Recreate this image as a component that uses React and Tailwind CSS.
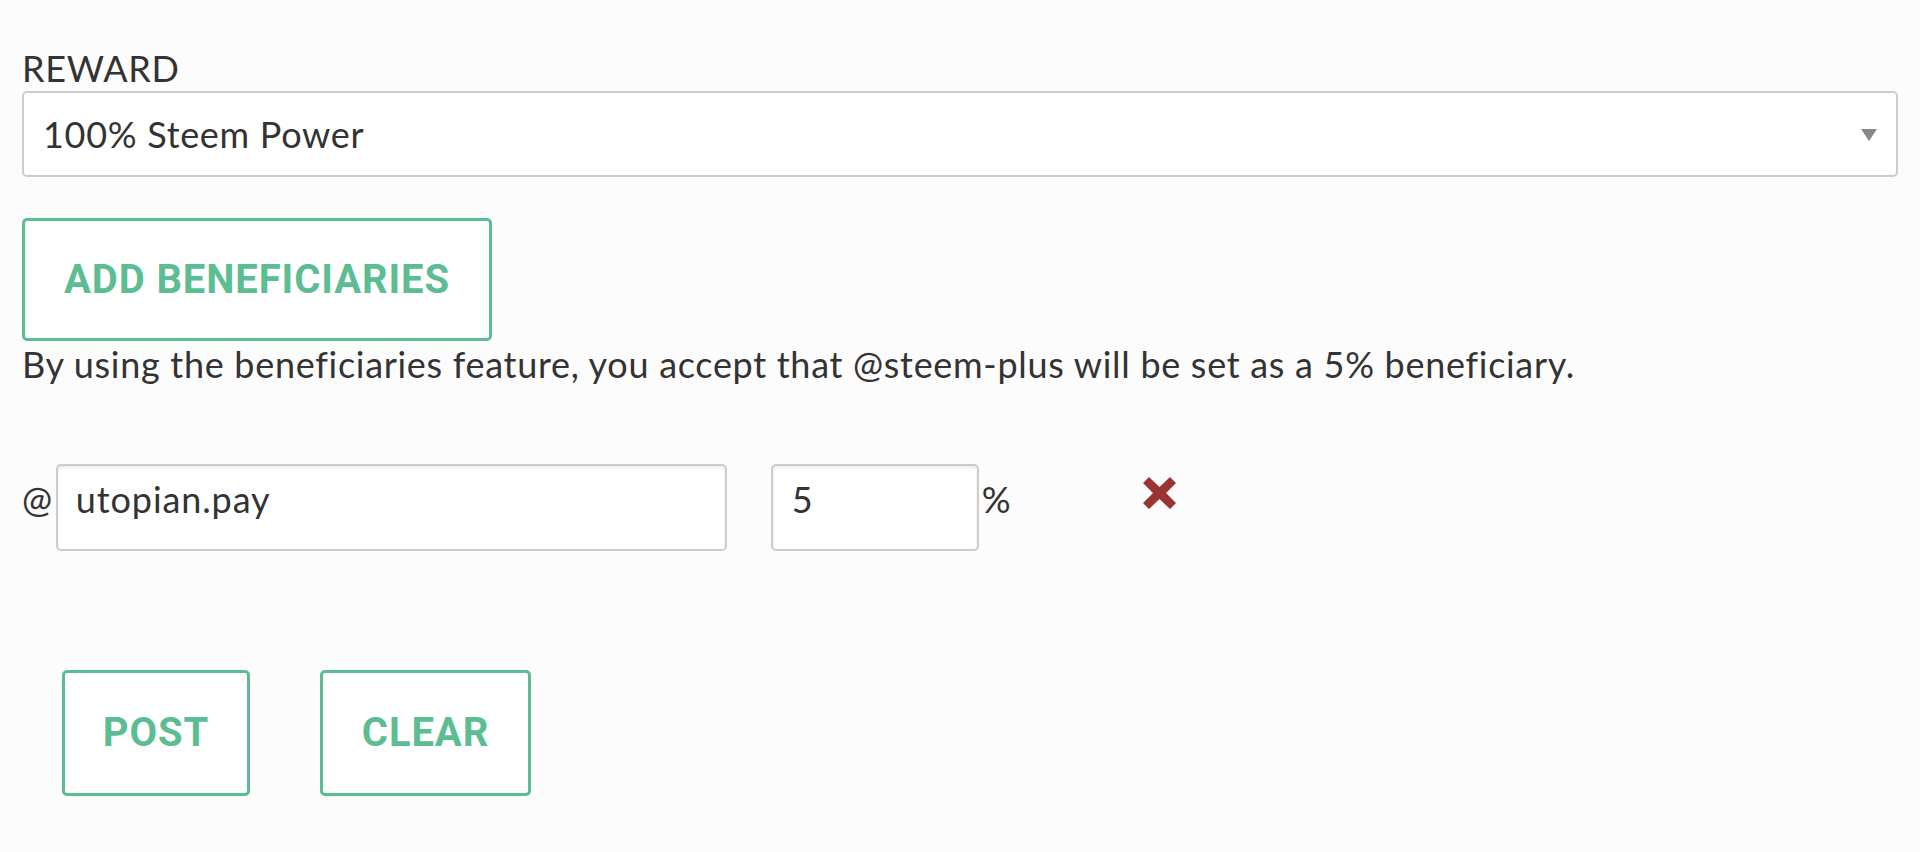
import { useState } from 'react';

const font = { fontFamily: 'Lato, "Source Sans Pro", "Liberation Sans", sans-serif' };

const GreenButton = ({ children }) => (
  <button
    type="button"
    className="h-full w-full rounded-[5px] border-[3px] border-[#5cbd93] bg-white text-[40px] font-bold leading-none tracking-[0.9px] text-[#5cbd93]"
    style={{ fontFamily: 'Roboto, "Liberation Sans", sans-serif' }}
  >
    {children}
  </button>
);

const App = () => {
  const [account, setAccount] = useState('utopian.pay');
  const [weight, setWeight] = useState('5');

  return (
    <div
      className="min-h-[852px] w-full bg-[#fcfcfc] px-[22px] pt-[46px] text-[36px] tracking-[0.7px] text-[#333333]"
      style={font}
    >
      <label className="block leading-[45px]">REWARD</label>
      <div className="relative flex h-[86px] items-center rounded-[5px] border-2 border-[#cccccc] bg-white pl-[19px]">
        <span>100% Steem Power</span>
        <svg className="absolute right-[19px] top-[36px]" width="16" height="12" viewBox="0 0 16 12">
          <polygon points="0,0 16,0 8,12" fill="#888888" />
        </svg>
      </div>

      <div className="mt-[41px] flex h-[123px] w-[470px]">
        <GreenButton>ADD BENEFICIARIES</GreenButton>
      </div>
      <p className="leading-[46px]">
        By using the beneficiaries feature, you accept that @steem-plus will be set as a 5% beneficiary.
      </p>

      <div className="mt-[77px] flex items-start">
        <span className="mr-[3px] pt-[12px] leading-[46px]">@</span>
        <input
          value={account}
          onChange={(event) => setAccount(event.target.value)}
          className="h-[87px] w-[671px] rounded-[5px] border-2 border-[#cccccc] bg-white px-[18px] pb-[18px] leading-[46px] tracking-[0.9px] shadow-[inset_0_2px_3px_rgba(0,0,0,0.08)] outline-none"
        />
        <input
          value={weight}
          onChange={(event) => setWeight(event.target.value)}
          className="ml-[44px] h-[87px] w-[208px] rounded-[5px] border-2 border-[#cccccc] bg-white px-[19px] pb-[18px] leading-[46px] shadow-[inset_0_2px_3px_rgba(0,0,0,0.08)] outline-none"
        />
        <span className="ml-[3px] pt-[12px] leading-[46px]">%</span>
        <button type="button" className="ml-[131px] mt-[12px]">
          <svg width="35" height="34" viewBox="0 0 35 34">
            <path
              d="M7 1 L17.5 11 L28 1 L34 7 L24 17 L34 27 L28 33 L17.5 23 L7 33 L1 27 L11 17 L1 7 Z"
              fill="#9a3432"
            />
          </svg>
        </button>
      </div>

      <div className="mt-[119px] flex gap-[70px] pl-[40px]">
        <div className="flex h-[126px] w-[188px]">
          <GreenButton>POST</GreenButton>
        </div>
        <div className="flex h-[126px] w-[211px]">
          <GreenButton>CLEAR</GreenButton>
        </div>
      </div>
    </div>
  );
};

export default App;
